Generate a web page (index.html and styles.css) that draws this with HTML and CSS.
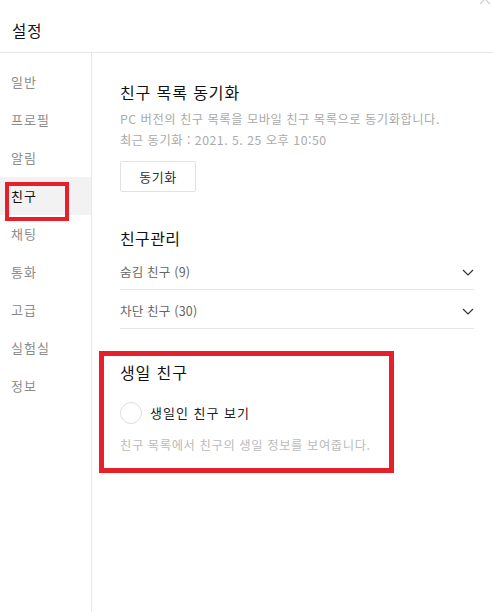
FILE: index.html
```html
<!DOCTYPE html>
<html lang="ko">
<head>
<meta charset="utf-8">
<title>설정</title>
<link rel="stylesheet" href="styles.css">
</head>
<body>
<div class="window">
  <svg class="close" width="12" height="12" viewBox="0 0 12 12" aria-label="닫기"><path d="M1 1 L11 11 M11 1 L1 11" stroke="#cfcfcf" stroke-width="1.2" fill="none"/></svg>
  <header class="header">설정</header>
  <div class="body">
    <nav class="sidebar">
      <div class="nav-item">일반</div>
      <div class="nav-item">프로필</div>
      <div class="nav-item">알림</div>
      <div class="nav-item active">친구</div>
      <div class="nav-item">채팅</div>
      <div class="nav-item">통화</div>
      <div class="nav-item">고급</div>
      <div class="nav-item">실험실</div>
      <div class="nav-item">정보</div>
    </nav>
    <main class="content">
      <section class="sync">
        <h2 class="title">친구 목록 동기화</h2>
        <p class="desc">PC 버전의 친구 목록을 모바일 친구 목록으로 동기화합니다.</p>
        <p class="desc">최근 동기화 : 2021. 5. 25 오후 10:50</p>
        <button class="btn">동기화</button>
      </section>
      <section class="manage">
        <h2 class="title">친구관리</h2>
        <div class="row"><span>숨김 친구 (9)</span>
          <svg class="chev" width="12" height="7" viewBox="0 0 12 7"><path d="M1 1 L6 6 L11 1" fill="none" stroke="#333" stroke-width="1.2"/></svg>
        </div>
        <div class="row"><span>차단 친구 (30)</span>
          <svg class="chev" width="12" height="7" viewBox="0 0 12 7"><path d="M1 1 L6 6 L11 1" fill="none" stroke="#333" stroke-width="1.2"/></svg>
        </div>
      </section>
      <section class="birthday">
        <h2 class="title">생일 친구</h2>
        <div class="toggle-row"><span class="radio"></span><span class="toggle-label">생일인 친구 보기</span></div>
        <p class="desc">친구 목록에서 친구의 생일 정보를 보여줍니다.</p>
      </section>
    </main>
  </div>
</div>
</body>
</html>
```
FILE: styles.css
```css
* { box-sizing: border-box; }
html, body { margin: 0; padding: 0; background: #fff; }
body {
  font-family: "Noto Sans CJK KR", "Noto Sans", sans-serif;
  color: #222;
}
.window {
  position: relative;
  width: 493px;
  height: 612px;
  overflow: hidden;
  display: flex;
  flex-direction: column;
}
.close {
  position: absolute;
  top: -7px;
  right: 2px;
}
.header {
  height: 53px;
  border-bottom: 1px solid #e6e6e6;
  padding: 19px 0 0 12px;
  font-size: 15.5px;
  line-height: 22px;
  letter-spacing: 1px;
  color: #111;
}
.body {
  flex: 1;
  display: flex;
}
.sidebar {
  width: 92px;
  border-right: 1px solid #e8e8e8;
  padding-top: 10px;
}
.nav-item {
  position: relative;
  height: 38px;
  line-height: 38px;
  padding-left: 11px;
  font-size: 13px;
  letter-spacing: 1px;
  color: #8c8c8c;
}
.nav-item.active {
  background: #f2f2f2;
  color: #111;
}
.nav-item.active::after {
  content: "";
  position: absolute;
  left: 5px;
  top: 5px;
  width: 56px;
  height: 31px;
  border: 4px solid #e5202a;
}
.content {
  flex: 1;
  padding: 27px 19px 0 28px;
}
.title {
  margin: 0;
  font-size: 16px;
  line-height: 24px;
  font-weight: normal;
  letter-spacing: 0.9px;
  color: #111;
}
.manage .title { letter-spacing: 0.4px; }
.desc {
  margin: 0;
  font-size: 12.3px;
  line-height: 21px;
  letter-spacing: 0.5px;
  color: #aaa;
}
.sync .title { margin-bottom: 5px; }
.btn {
  margin-top: 10px;
  width: 76px;
  height: 31px;
  background: #fff;
  border: 1px solid #e2e2e2;
  border-radius: 2px;
  font-family: inherit;
  font-size: 13px;
  letter-spacing: 0.5px;
  color: #333;
  padding: 0;
}
.manage { margin-top: 34px; }
.manage .title { margin-bottom: 1px; }
.row {
  display: flex;
  justify-content: space-between;
  align-items: center;
  padding: 11px 0 7px;
  line-height: 20px;
  font-size: 12.5px;
  letter-spacing: 0.2px;
  color: #666;
  border-bottom: 1px solid #e6e6e6;
}
.birthday {
  margin-top: 22px;
  margin-left: -21px;
  width: 295px;
  border: 5px solid #e5202a;
  padding: 4px 0 13px 16px;
}
.toggle-row {
  margin-top: 18px;
  display: flex;
  align-items: center;
  gap: 8px;
  height: 22px;
}
.radio {
  width: 22px;
  height: 22px;
  border: 1px solid #ddd;
  border-radius: 50%;
}
.toggle-label {
  font-size: 13px;
  letter-spacing: 1px;
  color: #222;
  line-height: 20px;
}
.birthday .desc {
  margin-top: 11px;
  line-height: 20px;
  letter-spacing: 0.6px;
  color: #bbb;
}
```
